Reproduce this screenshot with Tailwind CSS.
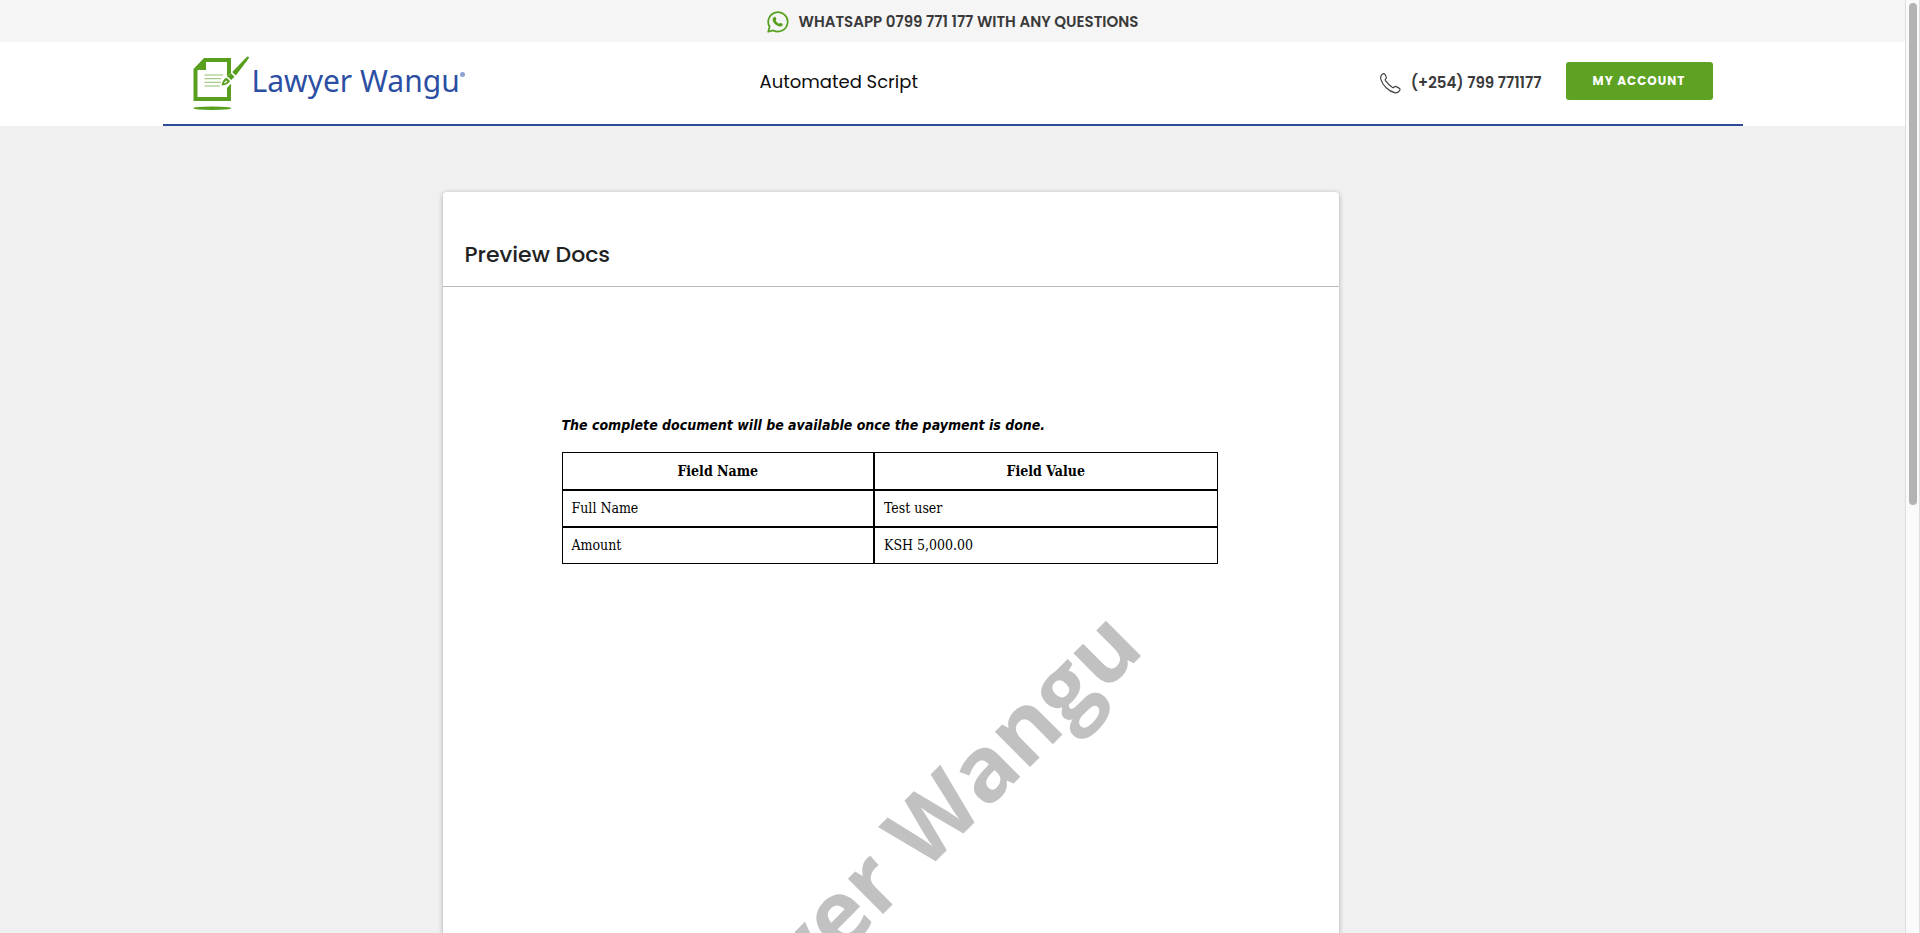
<!DOCTYPE html>
<html lang="en">
<head>
<meta charset="utf-8">
<meta name="viewport" content="width=device-width, initial-scale=1">
<title>Lawyer Wangu - Preview Docs</title>
<script src="https://cdn.jsdelivr.net/npm/@tailwindcss/browser@4"></script>
</head>
<body class="flex h-screen overflow-hidden bg-[#f0f0f0] font-[Poppins,Inter,sans-serif] text-[#3a3a3a]">
<div class="flex-1 min-w-0 overflow-hidden">
  <div class="h-[42px] bg-[#f5f5f5] flex items-center justify-center gap-[10px] pt-px">
    <svg class="size-[22px]" viewBox="0 0 22 22" fill="none" aria-hidden="true">
      <path d="M1.2 20.8 2.6 15.8A9.7 9.7 0 1 1 6.3 19.4Z" stroke="#56a01e" stroke-width="1.7" stroke-linejoin="round"/>
      <path d="M7.4 5.9c.5-.3 1-.2 1.200.3l.8 1.900c.1.4-.7 1.200-.7 1.500.7 1.500 1.800 2.500 3.300 3.200.4.100 1-1.100 1.400-1.100l2 1c.5.300.3 1.200 0 1.700-.6.900-1.900 1.300-2.900 1.100-3.500-.8-6-3.200-6.800-5.900-.3-1.500.4-3.100 1.700-3.700Z" fill="#56a01e"/>
    </svg>
    <a href="#" class="text-[15px] leading-6 font-semibold">WHATSAPP 0799 771 177 WITH ANY QUESTIONS</a>
  </div>
  <header class="bg-white">
    <div class="max-w-[1580px] mx-auto h-[84px] border-b-2 border-[#2e4a9b] px-[30px] flex items-start justify-between">
      <a href="#" class="flex flex-1 items-start pt-[14px]" aria-label="Lawyer Wangu">
        <svg class="w-[58px] h-[56px]" viewBox="0 0 58 56" aria-hidden="true">
          <path fill="#579f1c" fill-rule="evenodd" d="M.5 13 11 2H38V45H.5ZM4.500 14V41H34V6H13V14Z"/>
          <path d="M11.500 19H30M11.500 22.700H28M11.500 26.300H28M11.500 30H27" stroke="#8fc06a" stroke-width="1"/>
          <path d="M30 25 43 12 45 20 34 32Z" fill="#fff"/>
          <path fill="#579f1c" d="M54 .8c1.700-.7 2.600.8 1.500 2L42.800 19.600 39.200 16Z"/>
          <path fill="#579f1c" d="m37.900 17.200 3.600 3.600-3.300 3.300-3.600-3.500Z"/>
          <path fill="#579f1c" fill-rule="evenodd" d="M33.700 21.800 37 25c-1 2.500-4 4-8.500 4.600.7-3.700 2.100-6.800 5.200-7.800Zm-.3 2.700c-1 .5-1.900 1.500-2.500 3 1.500-.4 2.700-1 3.500-1.900Z"/>
          <ellipse cx="19.300" cy="52.300" rx="19" ry="1.700" fill="#579f1c"/>
        </svg>
        <span class="pl-px font-['Noto_Sans',sans-serif] text-[30px] leading-[50px] text-[#2c4fa3]">Lawyer Wangu</span>
        <span class="mt-4 size-[5px] rounded-full bg-[#8da2d3]"></span>
      </a>
      <div class="pt-6 text-[18px] leading-8 text-[#0c0c0c] w-[386px]">Automated Script</div>
      <div class="flex flex-1 justify-end items-start pt-5">
        <a href="#" class="flex items-center gap-[10px] pt-[5px] mr-6 text-[15px] leading-8 font-semibold">
          <svg class="size-[21px]" viewBox="0 0 21 21" fill="none" stroke="#444" stroke-width="1.200" stroke-linejoin="round" aria-hidden="true">
            <path d="M1.700 1.800C2.300 1 3.500.4 4.300.7c.8.500 1.500 2.100 1.900 3.200.300.900.1 1.500-.6 2.100-.5.400-.5.900-.1 1.600 1.900 2.700 4.200 5 7 6.800.7.400 1.200.3 1.600-.3.600-.7 1.200-.8 2-.5 1.300.5 2.700 1.200 3.500 1.900.8.800.3 1.700-.2 2.400-1.200 1.600-2.700 2.300-4.700 1.800C8.600 18.300 2.700 12.400.9 6.300.4 4.600.7 3.100 1.700 1.800Z"/>
          </svg>
          <span>(+254) 799 771177</span>
        </a>
        <button type="button" class="h-[38px] w-[147px] rounded-[3px] bg-[#5ea223] text-[12px] font-bold tracking-[1px] text-white">MY ACCOUNT</button>
      </div>
    </div>
  </header>
  <main class="max-w-[1580px] mx-auto pl-[280px] pt-[66px]">
    <section class="relative w-[896px] min-h-[1280px] bg-white rounded-[4px] shadow-[0_1px_5px_rgba(0,0,0,0.3)]">
      <h1 class="pt-[47px] pb-[15px] pl-[22px] text-[22px] leading-8 font-medium text-[#222] border-b border-[#b8b8b8]">Preview Docs</h1>
      <div class="pl-[119px] pr-[121px] pt-[126px]">
        <p class="font-['DejaVu_Sans_Condensed','DejaVu_Sans',sans-serif] text-[14px] leading-6 font-bold italic text-black">The complete document will be available once the payment is done.</p>
        <table class="mt-[15px] w-full table-fixed border-collapse border border-black font-['DejaVu_Serif_Condensed','DejaVu_Serif',serif] text-[14px] leading-5 text-black">
          <colgroup><col class="w-[312px]"><col></colgroup>
          <thead>
            <tr class="h-[37px]"><th class="border-r-2 border-b-2 border-black">Field Name</th><th class="border-b-2 border-black">Field Value</th></tr>
          </thead>
          <tbody>
            <tr class="h-[37px]"><td class="border-r-2 border-b-2 border-black px-[9px]">Full Name</td><td class="border-b-2 border-black px-[9px]">Test user</td></tr>
            <tr class="h-[37px]"><td class="border-r-2 border-black px-[9px]">Amount</td><td class="px-[9px]">KSH 5,000.00</td></tr>
          </tbody>
        </table>
      </div>
      <svg class="absolute inset-0 w-full h-full pointer-events-none" aria-hidden="true">
        <text transform="translate(703 459) rotate(-45)" text-anchor="end" class="font-['Open_Sans',sans-serif] text-[91px] font-bold" fill="#c1c1c1">Lawyer Wangu</text>
      </svg>
    </section>
  </main>
</div>
<div class="w-[15px] shrink-0 border-x border-[#dedede] bg-[#fafafa] pt-[3px]" aria-hidden="true">
  <div class="mx-auto h-[54%] w-2 rounded-full bg-[#b3b3b3]"></div>
</div>
</body>
</html>
